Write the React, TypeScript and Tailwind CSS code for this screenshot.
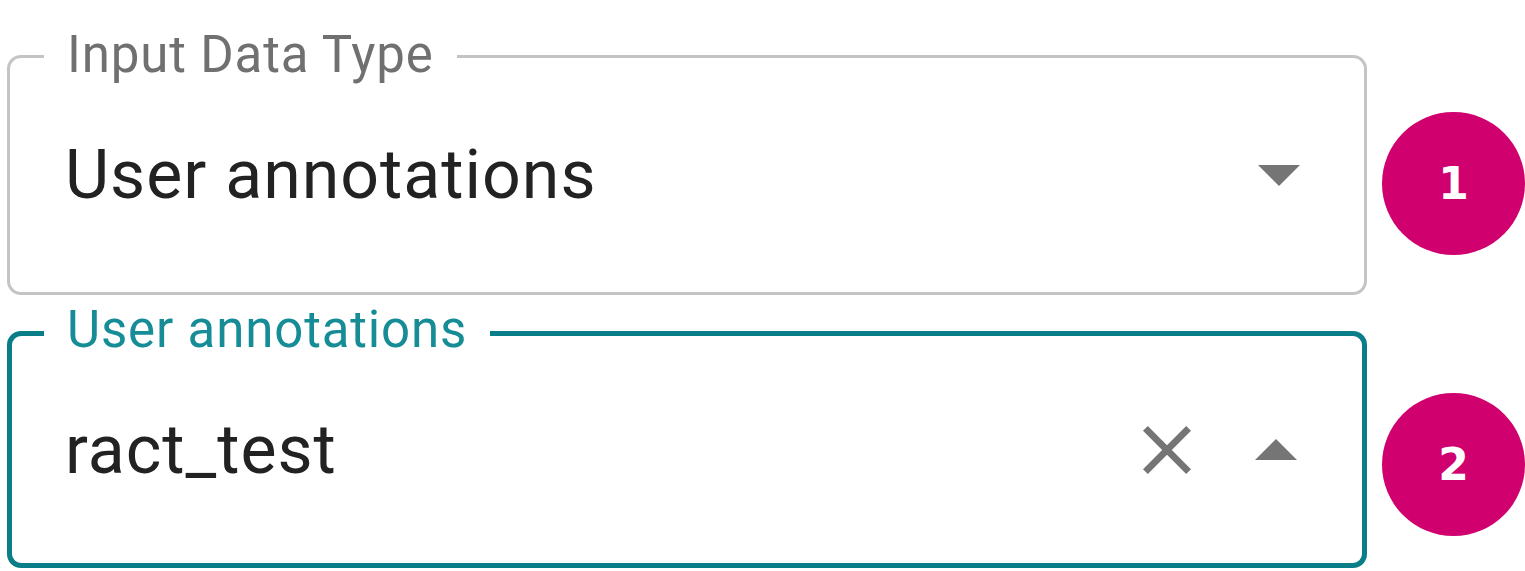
import React from "react";

function Badge({ n, offset }: { n: string; offset: string }) {
  return (
    <div
      className={`ml-[15px] flex h-[143px] w-[143px] shrink-0 items-center justify-center rounded-full bg-[#d0006f] ${offset}`}
    >
      <span className="font-['DejaVu_Sans',sans-serif] text-[44px] font-bold leading-none text-white">
        {n}
      </span>
    </div>
  );
}

function ArrowDown() {
  return (
    <svg width="42" height="21" viewBox="7 10 10 5" className="shrink-0">
      <path d="M7 10l5 5 5-5z" fill="#757575" />
    </svg>
  );
}

function ArrowUp() {
  return (
    <svg width="42" height="21" viewBox="7 9.5 10 5" className="shrink-0">
      <path d="M7 14.5l5-5 5 5z" fill="#757575" />
    </svg>
  );
}

function Clear() {
  return (
    <svg width="50" height="48" viewBox="5 5 14 14" className="shrink-0">
      <path
        d="M19 6.41L17.59 5 12 10.59 6.41 5 5 6.41 10.59 12 5 17.59 6.41 19 12 13.41 17.59 19 19 17.59 13.41 12z"
        fill="#757575"
      />
    </svg>
  );
}

export default function App() {
  return (
    <div className="h-[571px] w-[1525px] overflow-hidden bg-white pl-[7px] pt-[55px] font-['Roboto',sans-serif]">
      {/* input data type select */}
      <div className="flex items-start">
        <div className="relative flex h-[240px] w-[1360px] shrink-0 items-center rounded-[14px] border-[3px] border-[#c4c4c4] pl-[55px] pr-[64px]">
          <span className="absolute -top-[29px] left-[34px] bg-white px-[23px] text-[51px] leading-none tracking-[0.85px] text-[#707070]">
            Input Data Type
          </span>
          <span className="flex-1 text-[68px] leading-none tracking-[1px] text-[#222]">
            User annotations
          </span>
          <ArrowDown />
        </div>
        <Badge n="1" offset="mt-[57px]" />
      </div>

      {/* user annotations autocomplete (focused) */}
      <div className="mt-[36px] flex items-start">
        <div className="relative flex h-[237px] w-[1360px] shrink-0 items-center rounded-[14px] border-[5px] border-[#0a7e88] pl-[53px] pr-[65px]">
          <span className="absolute -top-[32px] left-[32px] bg-white px-[23px] text-[51px] leading-none tracking-[0.85px] text-[#168c96]">
            User annotations
          </span>
          <span className="flex-1 text-[68px] leading-none tracking-[1px] text-[#222]">ract_test</span>
          <div className="flex items-center gap-[63px]">
            <Clear />
            <ArrowUp />
          </div>
        </div>
        <Badge n="2" offset="mt-[62px]" />
      </div>
    </div>
  );
}
